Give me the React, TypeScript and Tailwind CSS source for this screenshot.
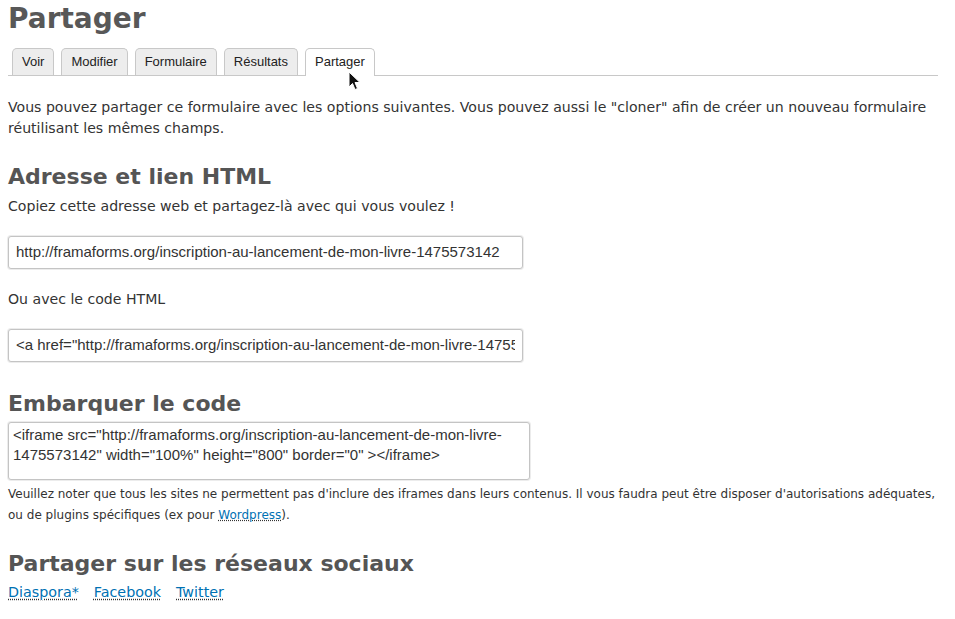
import React from "react"

const tabs = ["Voir", "Modifier", "Formulaire", "Résultats", "Partager"]

const url = "http://framaforms.org/inscription-au-lancement-de-mon-livre-1475573142"

function Field({ value }: { value: string }) {
  return (
    <div className="w-[515px] h-[33px] rounded-[3px] border border-[#c4c4c4] ring-1 ring-[#ececec] bg-white px-[7px] flex items-center">
      <div className="flex-1 overflow-hidden whitespace-nowrap font-['Liberation_Sans',Arial,sans-serif] text-[15px] text-[#333]">
        {value}
      </div>
    </div>
  )
}

function SectionTitle({ children, className = "" }: { children: React.ReactNode; className?: string }) {
  return (
    <h2 className={`text-[22px] leading-[26px] font-bold text-[#555] ${className}`}>{children}</h2>
  )
}

function Cursor() {
  return (
    <svg
      className="absolute left-[348px] top-[71px]"
      width="13"
      height="20"
      viewBox="0 0 13 20"
    >
      <path
        d="M1 1 L1 16 L4.5 12.5 L7 18.5 L9.5 17.5 L7 11.5 L12 11.5 Z"
        fill="#111"
        stroke="#fff"
        strokeWidth="1"
        strokeLinejoin="round"
      />
    </svg>
  )
}

export default function App() {
  return (
    <div className="relative min-h-screen bg-white font-['DejaVu_Sans',sans-serif] text-[#333]">
      <div className="ml-2 w-[930px]">
        <h1 className="pt-[1px] text-[28px] leading-[36px] font-bold text-[#585858]">Partager</h1>

        <ul className="mt-[11px] flex gap-[7px] border-b border-[#c8c8c8] pl-[4px] font-['Liberation_Sans',Arial,sans-serif] text-[13px] text-[#222]">
          {tabs.map((t) => {
            const active = t === "Partager"
            return (
              <li
                key={t}
                className={
                  active
                    ? "-mb-px rounded-t-[5px] border border-b-0 border-[#c8c8c8] bg-white px-[9px] pt-[5px] pb-[6px] leading-[16px]"
                    : "rounded-t-[5px] border border-b-0 border-[#c8c8c8] bg-[#ededed] px-[9px] pt-[5px] pb-[5px] leading-[16px]"
                }
              >
                {t}
              </li>
            )
          })}
        </ul>

        <p className="mt-[21px] text-[14.1px] leading-[21px]">
          Vous pouvez partager ce formulaire avec les options suivantes. Vous pouvez aussi le "cloner" afin de
          créer un nouveau formulaire réutilisant les mêmes champs.
        </p>

        <SectionTitle className="mt-[25px]">Adresse et lien HTML</SectionTitle>
        <p className="mt-[6px] text-[14.1px] leading-[21px]">Copiez cette adresse web et partagez-là avec qui vous voulez !</p>

        <div className="mt-[19px]">
          <Field value={url} />
        </div>

        <p className="mt-[20px] text-[14.1px] leading-[21px]">Ou avec le code HTML</p>

        <div className="mt-[19px]">
          <Field value={`<a href="${url}">${url}</a>`} />
        </div>

        <SectionTitle className="mt-[29px]">Embarquer le code</SectionTitle>
        <div className="mt-[5px] w-[522px] h-[58px] rounded-[3px] border border-[#c4c4c4] ring-1 ring-[#ececec] bg-white px-[4px] pt-[2px] font-['Liberation_Sans',Arial,sans-serif] text-[15px] leading-[20px] text-[#333]">
          {`<iframe src="${url}" width="100%" height="800" border="0" ></iframe>`}
        </div>

        <p className="mt-[4px] text-[12px] leading-[21px]">
          Veuillez noter que tous les sites ne permettent pas d'inclure des iframes dans leurs contenus. Il vous faudra
          peut être disposer d'autorisations adéquates, ou de plugins spécifiques (ex pour{" "}
          <a href="#" className="text-[#0071b3] underline decoration-dotted decoration-[#333]">
            Wordpress
          </a>
          ).
        </p>

        <SectionTitle className="mt-[25px]">Partager sur les réseaux sociaux</SectionTitle>
        <div className="mt-[5px] flex gap-[15px] text-[14.3px] leading-[21px]">
          {["Diaspora*", "Facebook", "Twitter"].map((l) => (
            <a
              key={l}
              href="#"
              className="text-[#0071b3] underline decoration-dotted decoration-[#333] underline-offset-2"
            >
              {l}
            </a>
          ))}
        </div>
      </div>
      <Cursor />
    </div>
  )
}
